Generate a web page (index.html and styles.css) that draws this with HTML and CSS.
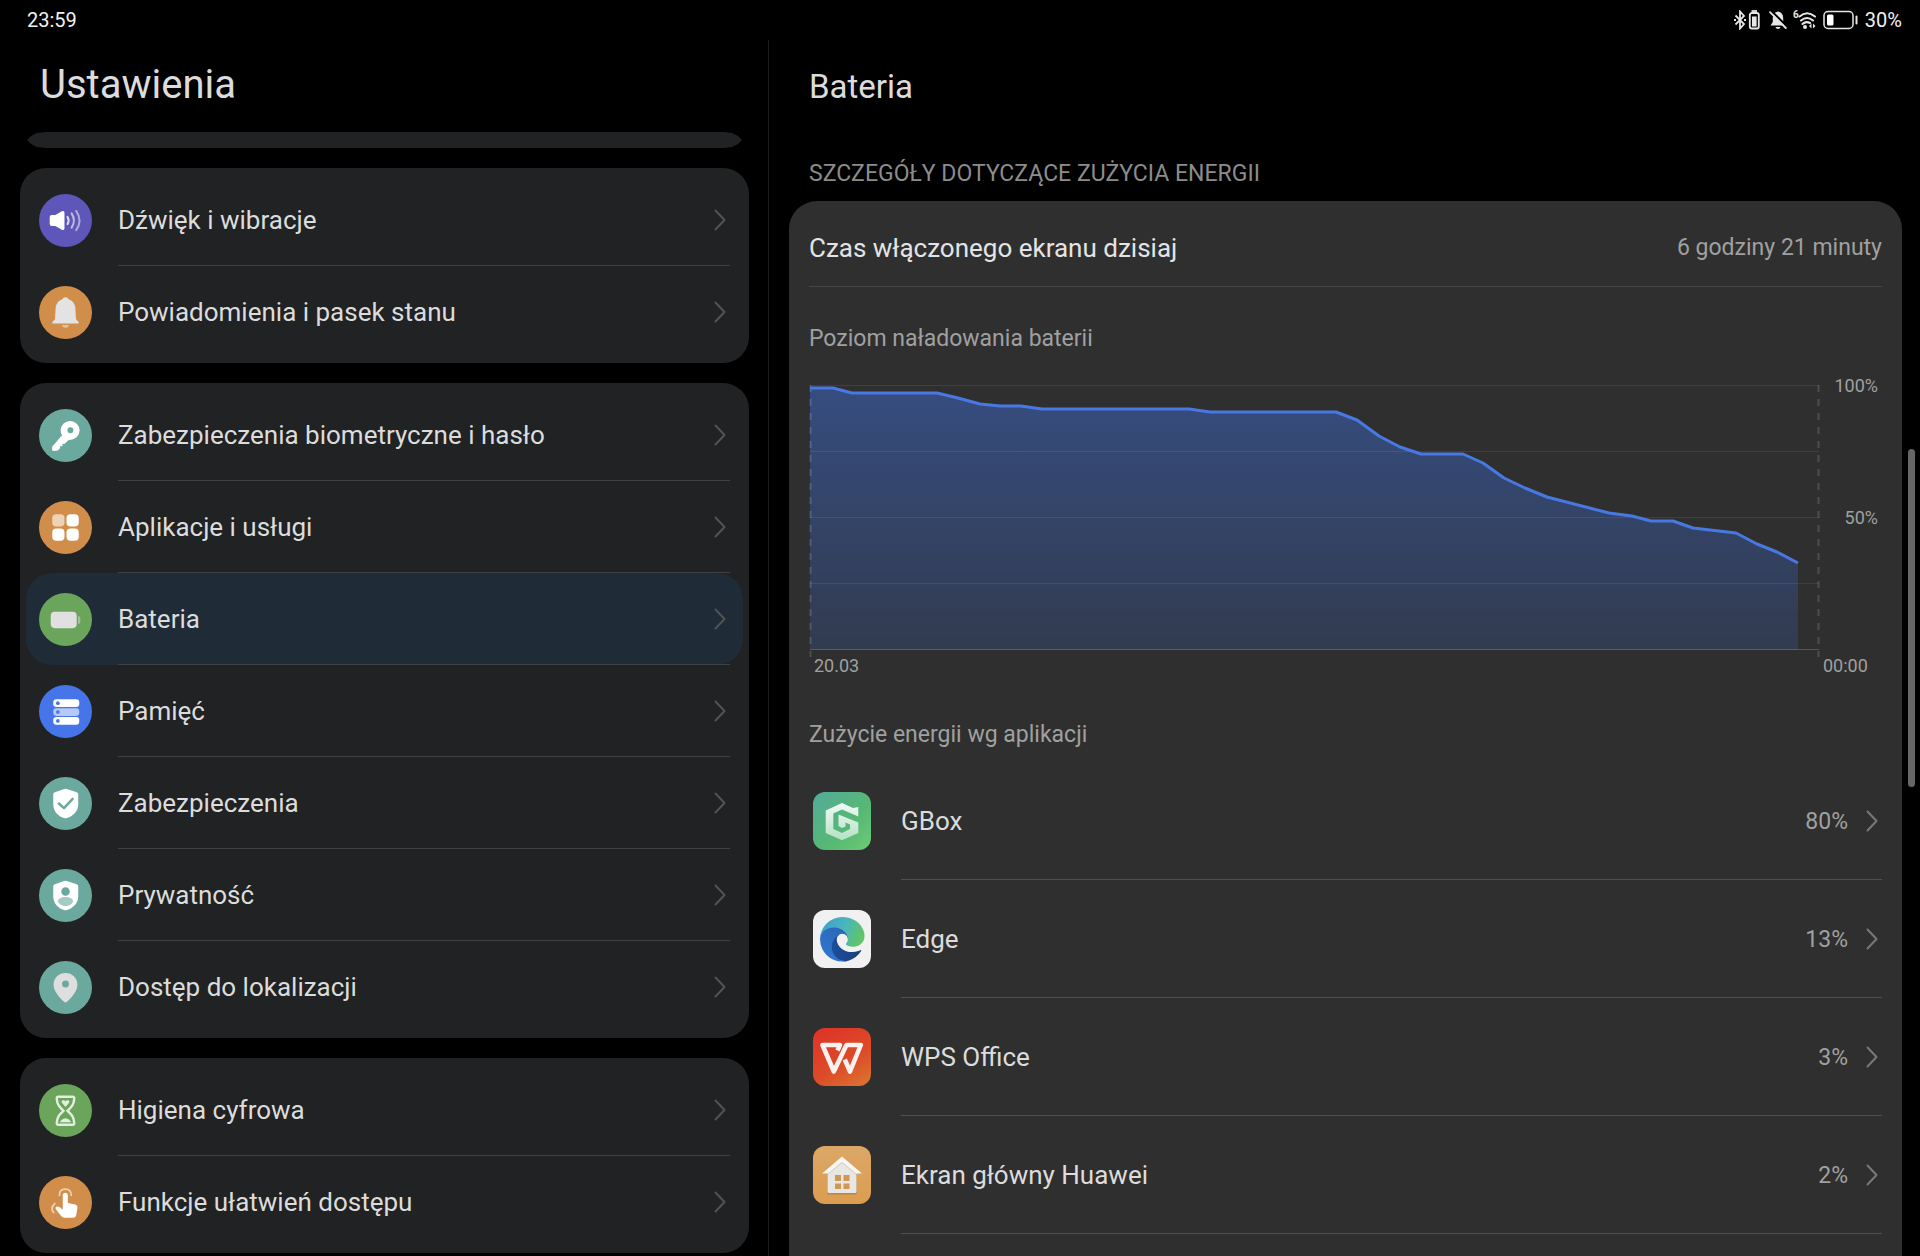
FILE: index.html
```html
<!DOCTYPE html>
<html lang="pl">
<head>
    <meta charset="UTF-8">
    <meta name="viewport" content="width=device-width, initial-scale=1.0">
    <title>Ustawienia - Bateria</title>
    <link rel="stylesheet" href="styles.css">
</head>
<body>

    <!-- shared icons -->
    <svg class="sprite" aria-hidden="true">
        <symbol id="chevron" viewBox="0 0 12 22">
            <path d="M1.5 1.5L10.5 11L1.5 20.5" fill="none" stroke="currentColor" stroke-width="2" stroke-linecap="round" stroke-linejoin="round"/>
        </symbol>
        <symbol id="shield" viewBox="0 0 52 52">
            <path d="M26 11.5Q27 11.5 28 12L37 15Q38.5 15.6 38.5 17V27C38.5 34 33 38.5 27.5 40.3Q26 40.8 24.5 40.3C19 38.5 14 34 14 27V17Q14 15.6 15.5 15L24 12Q25 11.5 26 11.5Z" fill="#fff"/>
        </symbol>
    </svg>

    <!-- status bar start -->
    <header class="status-bar">
        <span class="clock">23:59</span>
        <div class="status-icons">
            <svg class="icon-bt" viewBox="0 0 26 20" aria-hidden="true">
                <path d="M1.5 5.5L10 14L6 18.5V1.5L10 6L1.5 14.5" fill="none" stroke="#e6e6e6" stroke-width="1.8"/>
                <path d="M0 10H2M10 10H12" stroke="#e6e6e6" stroke-width="2"/>
                <rect x="15.8" y="3" width="9" height="15.5" rx="2" fill="none" stroke="#e6e6e6" stroke-width="1.8"/>
                <rect x="18" y="6.5" width="4.600" height="10" fill="#e6e6e6"/>
                <path d="M17.5 1H23" stroke="#e6e6e6" stroke-width="1.8"/>
            </svg>
            <svg class="icon-mute" viewBox="0 0 18 20" aria-hidden="true">
                <path d="M9 1.5C12.5 2 14.2 4.5 14.2 8V12L16.5 15.5H1.5L3.8 12V8C3.8 4.5 5.5 2 9 1.5Z" fill="#e6e6e6"/>
                <path d="M6.5 17H11.5Q11 19 9 19Q7 19 6.5 17Z" fill="#e6e6e6"/>
                <path d="M2 .5L18 16.5" stroke="#000" stroke-width="2"/>
                <path d="M1 2.2L16.8 18" stroke="#e6e6e6" stroke-width="1.8" stroke-linecap="round"/>
            </svg>
            <svg class="icon-wifi" viewBox="0 0 24 20" aria-hidden="true">
                <text x="0" y="8" class="wifi-gen">6</text>
                <path d="M6.5 6.5Q14 0 22 6.5M8 10.5Q14 5.5 20 10.5M9.5 14Q13 10.8 17 13" fill="none" stroke="#e6e6e6" stroke-width="2.1" stroke-linecap="round"/>
                <circle cx="12" cy="17" r="2" fill="#e6e6e6"/>
                <path d="M18.5 13.5V18.5L16 16ZM20 13.5V18.5L22.5 16Z" fill="#e6e6e6"/>
            </svg>
            <svg class="icon-battery" viewBox="0 0 36 20" aria-hidden="true">
                <rect x="1" y="1.5" width="29" height="17" rx="4" fill="none" stroke="#e6e6e6" stroke-width="1.5"/>
                <rect x="4" y="4.5" width="6.5" height="11" rx="1.5" fill="#fff"/>
                <path d="M33.5 6.5V13.5" stroke="#e6e6e6" stroke-width="2" stroke-linecap="round"/>
            </svg>
            <span>30%</span>
        </div>
    </header>
    <!-- status bar end -->

    <div class="container">

        <!-- settings list start -->
        <nav class="sidebar">
            <h1>Ustawienia</h1>
            <div class="card-cut"></div>

            <ul class="menu-card">
                <li><a href="#dzwiek">
                    <svg class="menu-icon" viewBox="0 0 52 52" aria-hidden="true">
                        <circle cx="26" cy="26" r="26" fill="#5e56b9"/>
                        <path d="M10.5 22.5Q10.5 20.5 12.5 20.5H16L22.5 17Q25 16 25 18.5V33.5Q25 36 22.5 35L16 31.5H12.5Q10.5 31.5 10.5 29.5Z" fill="#fff"/>
                        <g fill="none" stroke="#fff" stroke-width="2" stroke-linecap="round">
                            <path d="M28 22.5Q30 26 28 29.5" opacity=".8"/>
                            <path d="M32 19Q36.5 26 32 33" opacity=".6"/>
                            <path d="M36.5 16.5Q43 26 36.5 35.5" opacity=".5"/>
                        </g>
                    </svg>
                    <span class="menu-label">Dźwięk i wibracje <svg class="chevron" aria-hidden="true"><use href="#chevron"/></svg></span>
                </a></li>
                <li><a href="#powiadomienia">
                    <svg class="menu-icon" viewBox="0 0 52 52" aria-hidden="true">
                        <circle cx="26" cy="26" r="26" fill="#d18e4a"/>
                        <path d="M26 11Q28.5 11 29 13C33.5 14.5 35.5 18 35.7 22L36.3 32.5L39 35.5Q39.5 36.8 38 36.8H14Q12.5 36.8 13 35.5L15.7 32.5L16.3 22C16.5 18 18.5 14.5 23 13Q23.5 11 26 11Z" fill="#e3e3e3"/>
                        <path d="M22.5 38.3H29.5Q29 41 26 41Q23 41 22.5 38.3Z" fill="#e3e3e3" opacity=".6"/>
                    </svg>
                    <span class="menu-label">Powiadomienia i pasek stanu <svg class="chevron" aria-hidden="true"><use href="#chevron"/></svg></span>
                </a></li>
            </ul>

            <ul class="menu-card">
                <li><a href="#biometria">
                    <svg class="menu-icon" viewBox="0 0 52 52" aria-hidden="true">
                        <circle cx="26" cy="26" r="26" fill="#6ba89d"/>
                        <path d="M23 26L13.5 37V40.5H17.5L20 38.5V36H22.5V33.5H25L30 29" fill="#fff" stroke="#fff" stroke-width="1" stroke-linejoin="round"/>
                        <circle cx="30.5" cy="21" r="9.3" fill="#fff"/>
                        <circle cx="30.8" cy="20.8" r="2.9" fill="#6ba89d"/>
                    </svg>
                    <span class="menu-label">Zabezpieczenia biometryczne i hasło <svg class="chevron" aria-hidden="true"><use href="#chevron"/></svg></span>
                </a></li>
                <li><a href="#aplikacje">
                    <svg class="menu-icon" viewBox="0 0 52 52" aria-hidden="true">
                        <circle cx="26" cy="26" r="26" fill="#d18e4a"/>
                        <rect x="13" y="13" width="12" height="12" rx="4" fill="#fff" opacity=".6"/>
                        <rect x="27" y="13" width="12" height="12" rx="4" fill="#fff"/>
                        <rect x="13" y="27" width="12" height="12" rx="4" fill="#fff"/>
                        <rect x="27" y="27" width="12" height="12" rx="4" fill="#fff"/>
                    </svg>
                    <span class="menu-label">Aplikacje i usługi <svg class="chevron" aria-hidden="true"><use href="#chevron"/></svg></span>
                </a></li>
                <li class="active"><a href="#bateria" aria-current="page">
                    <svg class="menu-icon" viewBox="0 0 52 52" aria-hidden="true">
                        <circle cx="26" cy="26" r="26" fill="#6ba55c"/>
                        <rect x="11.5" y="18.5" width="25.5" height="16" rx="4" fill="#e0e0e0"/>
                        <path d="M38.3 22.5Q40.5 22.5 40.5 24.5V28.5Q40.5 30.5 38.3 30.5Z" fill="#e0e0e0" opacity=".5"/>
                    </svg>
                    <span class="menu-label">Bateria <svg class="chevron" aria-hidden="true"><use href="#chevron"/></svg></span>
                </a></li>
                <li><a href="#pamiec">
                    <svg class="menu-icon" viewBox="0 0 52 52" aria-hidden="true">
                        <circle cx="26" cy="26" r="26" fill="#4675ea"/>
                        <rect x="14" y="14" width="25.5" height="7.6" rx="3" fill="#fff"/>
                        <rect x="14" y="22.7" width="25.5" height="7.6" rx="3" fill="#fff" opacity=".6"/>
                        <rect x="14" y="31.4" width="25.5" height="7.6" rx="3" fill="#fff"/>
                        <g fill="#4675ea">
                            <circle cx="18.5" cy="17.8" r="1.8"/>
                            <circle cx="18.5" cy="26.5" r="1.8"/>
                            <circle cx="18.5" cy="35.2" r="1.8"/>
                        </g>
                    </svg>
                    <span class="menu-label">Pamięć <svg class="chevron" aria-hidden="true"><use href="#chevron"/></svg></span>
                </a></li>
                <li><a href="#zabezpieczenia">
                    <svg class="menu-icon" viewBox="0 0 52 52" aria-hidden="true">
                        <circle cx="26" cy="26" r="26" fill="#6ba89d"/>
                        <use href="#shield"/>
                        <path d="M19.5 26L24.5 30.5L33 21.5" fill="none" stroke="#6ba89d" stroke-width="2.4" stroke-linecap="round" stroke-linejoin="round"/>
                    </svg>
                    <span class="menu-label">Zabezpieczenia <svg class="chevron" aria-hidden="true"><use href="#chevron"/></svg></span>
                </a></li>
                <li><a href="#prywatnosc">
                    <svg class="menu-icon" viewBox="0 0 52 52" aria-hidden="true">
                        <circle cx="26" cy="26" r="26" fill="#6ba89d"/>
                        <use href="#shield"/>
                        <circle cx="26" cy="22" r="4.200" fill="#6ba89d"/>
                        <path d="M18.5 32C18.5 26 33.5 26 33.5 32C31 38 21 38 18.5 32Z" fill="#a6cac4"/>
                    </svg>
                    <span class="menu-label">Prywatność <svg class="chevron" aria-hidden="true"><use href="#chevron"/></svg></span>
                </a></li>
                <li><a href="#lokalizacja">
                    <svg class="menu-icon" viewBox="0 0 52 52" aria-hidden="true">
                        <circle cx="26" cy="26" r="26" fill="#6ba89d"/>
                        <path d="M26 11.7C32.5 11.7 37.7 16.5 37.7 23C37.7 30 31.5 36 27.5 40Q26 41.3 24.5 40C20.5 36 14.3 30 14.3 23C14.3 16.5 19.5 11.7 26 11.7Z" fill="#dedede"/>
                        <circle cx="26" cy="22.5" r="3.4" fill="#6ba89d"/>
                    </svg>
                    <span class="menu-label">Dostęp do lokalizacji <svg class="chevron" aria-hidden="true"><use href="#chevron"/></svg></span>
                </a></li>
            </ul>

            <ul class="menu-card">
                <li><a href="#higiena">
                    <svg class="menu-icon" viewBox="0 0 52 52" aria-hidden="true">
                        <circle cx="26" cy="26" r="26" fill="#6ba55c"/>
                        <path d="M19 12.5H33Q35 12.5 34.5 15C34 20.5 32 22.5 28 26.3C32 30 34 32 34.5 37.5Q35 40 33 40H19Q17 40 17.5 37.5C18 32 20 30 24 26.3C20 22.5 18 20.5 17.5 15Q17 12.5 19 12.5Z" fill="none" stroke="#e3eedf" stroke-width="2.4"/>
                        <path d="M26 22.5L22.5 18.5Q21.5 16.5 23.5 16Q25 15.7 26 17Q27 15.7 28.5 16Q30.5 16.5 29.5 18.5Z" fill="#e3eedf"/>
                        <path d="M20.5 37.5Q22 34 26 33.5Q30 34 31.5 37.5Z" fill="#e3eedf"/>
                    </svg>
                    <span class="menu-label">Higiena cyfrowa <svg class="chevron" aria-hidden="true"><use href="#chevron"/></svg></span>
                </a></li>
                <li><a href="#dostepnosc">
                    <svg class="menu-icon" viewBox="0 0 52 52" aria-hidden="true">
                        <circle cx="26" cy="26" r="26" fill="#d18e4a"/>
                        <path d="M23.3 19Q23.3 16.5 25.8 16.5Q28.3 16.5 28.3 19V26.5L35.5 28Q38 28.8 37.7 31.5L36.5 38.5Q36 41 33.5 41H25Q23 41 21.5 39L16.5 32.5Q15.5 30 18 30Q20.5 30.2 23.3 33Z" fill="#fff"/>
                        <g fill="none" stroke="#fff" stroke-width="1.7" stroke-linecap="round" opacity=".6">
                            <path d="M20 19Q20 12.8 25.8 12.8Q31.5 12.8 31.7 19"/>
                            <path d="M15.5 27Q10.5 31.5 14.5 36"/>
                        </g>
                    </svg>
                    <span class="menu-label">Funkcje ułatwień dostępu <svg class="chevron" aria-hidden="true"><use href="#chevron"/></svg></span>
                </a></li>
            </ul>
        </nav>
        <!-- settings list end -->

        <!-- battery details start -->
        <main class="content">
            <h2>Bateria</h2>
            <h3>SZCZEGÓŁY DOTYCZĄCE ZUŻYCIA ENERGII</h3>

            <section class="battery-card">
                <div class="screen-time">
                    <span>Czas włączonego ekranu dzisiaj</span>
                    <span class="value">6 godziny 21 minuty</span>
                </div>

                <p class="sub-title chart-title">Poziom naładowania baterii</p>
                <div class="chart">
                    <svg class="plot" viewBox="0 0 1009 265" preserveAspectRatio="none" role="img" aria-label="Poziom naładowania baterii">
                        <defs>
                            <linearGradient id="area" x1="0" y1="0" x2="0" y2="1">
                                <stop offset="0" stop-color="#3f74ea" stop-opacity=".43"/>
                                <stop offset="1" stop-color="#3f74ea" stop-opacity=".17"/>
                            </linearGradient>
                        </defs>
                        <path fill="url(#area)" d="M0 3H23L42 8H127L148 13L170 19L190 21H211L232 24H379L400 27H526L547 35L569 51L590 62L611 69H653L673 78L694 93L715 103L737 112L799 128L822 131L841 136H863L883 143L926 148L947 159L967 167L988 178V265H0Z"/>
                        <g class="grid-lines">
                            <path d="M0 .5H1009M0 66.5H1009M0 132.5H1009M0 198.5H1009"/>
                            <path class="base" d="M0 264.5H1009"/>
                            <path class="dashed" d="M.5 0V272M1008.5 0V272"/>
                        </g>
                        <path class="line" d="M0 3H23L42 8H127L148 13L170 19L190 21H211L232 24H379L400 27H526L547 35L569 51L590 62L611 69H653L673 78L694 93L715 103L737 112L799 128L822 131L841 136H863L883 143L926 148L947 159L967 167L988 178"/>
                    </svg>
                    <div class="y-axis">
                        <span>100%</span>
                        <span>50%</span>
                    </div>
                    <span class="x-start">20.03</span>
                    <span class="x-end">00:00</span>
                </div>

                <p class="sub-title apps-title">Zużycie energii wg aplikacji</p>
                <ul class="app-list">
                    <li><a href="#gbox">
                        <svg class="app-icon" viewBox="0 0 58 58" aria-hidden="true">
                            <defs>
                                <linearGradient id="gbox" x1="0" y1="0" x2="1" y2="1">
                                    <stop offset="0" stop-color="#53ab9a"/>
                                    <stop offset=".6" stop-color="#56b874"/>
                                    <stop offset="1" stop-color="#6dcc75"/>
                                </linearGradient>
                                <linearGradient id="gboxG" x1="0" y1="0" x2="0" y2="1">
                                    <stop offset="0" stop-color="#f1faf5"/>
                                    <stop offset="1" stop-color="#b4e2c4"/>
                                </linearGradient>
                            </defs>
                            <rect width="58" height="58" rx="12" fill="url(#gbox)"/>
                            <path d="M29 11L40 16L45.3 15V24.5L29 17.5L20.3 21.5V37L29 41L37 37V32.5L32.5 30.5V34.5L29 36L25.5 34V22.5L45.3 30.5V41L29 48.3L12.7 41V18.5Z" fill="url(#gboxG)"/>
                        </svg>
                        <span class="app-label">GBox <span class="percent">80% <svg class="chevron" aria-hidden="true"><use href="#chevron"/></svg></span></span>
                    </a></li>
                    <li><a href="#edge">
                        <svg class="app-icon" viewBox="0 0 58 58" aria-hidden="true">
                            <defs>
                                <linearGradient id="edgeDark" x1="0" y1="0" x2="1" y2="0">
                                    <stop offset="0" stop-color="#1b4f9e"/>
                                    <stop offset="1" stop-color="#1c3f7c"/>
                                </linearGradient>
                                <linearGradient id="edgeBlue" x1=".8" y1="0" x2=".3" y2="1">
                                    <stop offset="0" stop-color="#2c63b4"/>
                                    <stop offset="1" stop-color="#3179d0"/>
                                </linearGradient>
                                <linearGradient id="edgeTeal" x1="0" y1=".3" x2="1" y2=".6">
                                    <stop offset="0" stop-color="#3f9fd0"/>
                                    <stop offset=".5" stop-color="#49b5bd"/>
                                    <stop offset="1" stop-color="#62c660"/>
                                </linearGradient>
                            </defs>
                            <rect width="58" height="58" rx="12" fill="#f1f1f1"/>
                            <g transform="translate(7 7) scale(.174)">
                                <path fill="url(#edgeDark)" d="M231 190.5c-3.4 1.8-6.9 3.4-10.5 4.7a101.5 101.5 0 0 1-35.9 6.4c-47.3 0-88.5-32.5-88.5-74.3a31.5 31.5 0 0 1 16.4-27.3c-42.8 1.8-53.8 46.4-53.8 72.5 0 74 68.1 81.4 82.8 81.4 7.9 0 19.8-2.3 27-4.6l1.3-.4a128.3 128.3 0 0 0 66.6-52.8 4 4 0 0 0-5.4-5.6z"/>
                                <path fill="url(#edgeBlue)" d="M105.7 241.4a79.2 79.2 0 0 1-22.7-21.3 80.7 80.7 0 0 1 29.5-120c3.2-1.5 8.5-4.1 15.6-4a32.4 32.4 0 0 1 25.7 13 31.9 31.9 0 0 1 6.3 18.7c0-.2 24.5-79.6-80-79.6-43.9 0-80 41.6-80 78.2a130.2 130.2 0 0 0 12.1 56 128 128 0 0 0 156.4 67 75.5 75.5 0 0 1-62.8-8z"/>
                                <path fill="url(#edgeTeal)" d="M152.3 148.9c-.8 1-3.3 2.5-3.3 5.7 0 2.6 1.7 5.1 4.7 7.2 14.4 10 41.5 8.7 41.6 8.7 10.7 0 21.1-2.9 30.3-8.3A61.4 61.4 0 0 0 256 109.4c.3-22.4-8-37.3-11.3-43.9C223.5 23.9 177.7 0 128 0A128 128 0 0 0 0 126.2c.5-36.5 36.8-66 80-66 3.5 0 23.5.3 42 10 16.3 8.6 24.9 18.9 30.8 29.2 6.2 10.7 7.3 24.1 7.3 29.5 0 5.3-2.7 13.3-7.8 20z"/>
                            </g>
                        </svg>
                        <span class="app-label">Edge <span class="percent">13% <svg class="chevron" aria-hidden="true"><use href="#chevron"/></svg></span></span>
                    </a></li>
                    <li><a href="#wps">
                        <svg class="app-icon" viewBox="0 0 58 58" aria-hidden="true">
                            <defs>
                                <linearGradient id="wps" x1=".2" y1="0" x2=".8" y2="1">
                                    <stop offset="0" stop-color="#df3427"/>
                                    <stop offset=".6" stop-color="#dd4b28"/>
                                    <stop offset="1" stop-color="#db702f"/>
                                </linearGradient>
                            </defs>
                            <rect width="58" height="58" rx="12" fill="url(#wps)"/>
                            <path d="M24.5 22.5L27 17H9.5L20.8 43.5L33.5 17H47.8L37 43.5L31.8 31.5" fill="none" stroke="#fbf1ee" stroke-width="4.6" stroke-linejoin="round"/>
                        </svg>
                        <span class="app-label">WPS Office <span class="percent">3% <svg class="chevron" aria-hidden="true"><use href="#chevron"/></svg></span></span>
                    </a></li>
                    <li><a href="#huawei">
                        <svg class="app-icon" viewBox="0 0 58 58" aria-hidden="true">
                            <defs>
                                <linearGradient id="home" x1="0" y1="0" x2="0" y2="1">
                                    <stop offset="0" stop-color="#dca767"/>
                                    <stop offset="1" stop-color="#db9d50"/>
                                </linearGradient>
                            </defs>
                            <rect width="58" height="58" rx="12" fill="url(#home)"/>
                            <path d="M14 27.5H44V47Q44 48.5 42.5 48.5H15.5Q14 48.5 14 47Z" fill="#a8773a" opacity=".6"/>
                            <path d="M14.5 25L29 14L43.5 25V45.5Q43.5 47 42 47H16Q14.5 47 14.5 45.5Z" fill="#e9e7e3"/>
                            <path d="M29 10.5L49 27.5H43L29 16L15 27.5H9Z" fill="#f7f6f4"/>
                            <path d="M15 28L29 16.5L43 28" fill="none" stroke="#cfcac2" stroke-width="1"/>
                            <path d="M22 29H28V35H22ZM30.5 29H36.5V35H30.5ZM22 37.5H28V43H22ZM30.5 37.5H36.5V43H30.5Z" fill="#cf9853"/>
                        </svg>
                        <span class="app-label">Ekran główny Huawei <span class="percent">2% <svg class="chevron" aria-hidden="true"><use href="#chevron"/></svg></span></span>
                    </a></li>
                </ul>
            </section>
            <div class="scroll-thumb"></div>
        </main>
        <!-- battery details end -->

    </div>

</body>
</html>
```
FILE: styles.css
```css
* {
    box-sizing: border-box;
}

body {
    margin: 0;
    height: 100vh;
    display: flex;
    flex-direction: column;
    overflow: hidden;
    background-color: #000;
    color: #dcdcdc;
    font-family: Roboto, "Noto Sans", sans-serif;
    font-size: 26px;
}

h1, h2, h3, p, ul {
    margin: 0;
    padding: 0;
    font-weight: 400;
}

ul {
    list-style: none;
}

a {
    color: inherit;
    text-decoration: none;
}

.sprite {
    display: none;
}

/* status bar */

.status-bar {
    flex: none;
    height: 40px;
    padding: 0 18px 0 27px;
    display: flex;
    justify-content: space-between;
    align-items: center;
    font-size: 20px;
    color: #f0f0f0;
}

.status-icons {
    display: flex;
    align-items: center;
    gap: 6px;
}

.status-icons svg {
    height: 20px;
}

.icon-bt {
    width: 26px;
    margin-right: 3px;
}

.icon-mute {
    width: 18px;
}

.icon-wifi {
    width: 24px;
}

.icon-battery {
    width: 36px;
}

.wifi-gen {
    font-size: 10px;
    font-weight: 700;
    fill: #e6e6e6;
}

.container {
    flex: 1;
    min-height: 0;
    display: flex;
}

/* left side */

.sidebar {
    flex: 0 0 40%;
    padding: 0 19px 0 20px;
    overflow: hidden;
}

.sidebar h1 {
    height: 92px;
    padding: 0 20px;
    font-size: 40px;
    line-height: 90px;
}

/* card that has almost scrolled out of view */
.card-cut {
    height: 16px;
    margin: 0 7px 20px;
    background-color: #202223;
    clip-path: polygon(0 50%, 4px 25%, 10px 6%, 18px 0, calc(100% - 18px) 0, calc(100% - 10px) 6%, calc(100% - 4px) 25%, 100% 50%, calc(100% - 4px) 75%, calc(100% - 10px) 94%, calc(100% - 18px) 100%, 18px 100%, 10px 94%, 4px 75%);
}

.menu-card {
    margin-bottom: 20px;
    padding: 6px 6px 5px;
    border-radius: 26px;
    background-color: #202223;
}

.menu-card a {
    height: 92px;
    padding: 0 13px;
    display: flex;
    align-items: center;
    gap: 26px;
}

.menu-icon {
    flex: none;
    width: 53px;
    height: 53px;
}

.menu-label {
    flex: 1;
    height: 92px;
    padding-right: 4px;
    display: flex;
    justify-content: space-between;
    align-items: center;
    border-bottom: 1px solid #3e4042;
}

.menu-card li:last-child .menu-label {
    border-color: transparent;
}

.menu-card .active {
    border-radius: 26px;
    background-color: #202b38;
}

.chevron {
    flex: none;
    width: 12px;
    height: 22px;
    color: #515355;
}

/* right side */

.content {
    flex: 1;
    position: relative;
    display: flex;
    flex-direction: column;
    padding: 0 18px 0 20px;
    border-left: 1px solid #1c1c1c;
}

.content h2 {
    padding: 0 20px;
    font-size: 33px;
    line-height: 94px;
}

.content h3 {
    padding: 26px 20px 13px;
    font-size: 23px;
    line-height: 28px;
    color: #8c8c8c;
}

.battery-card {
    flex: 1;
    padding: 6px 20px 0;
    border-radius: 28px 28px 0 0;
    background-color: #2f2f2f;
}

.screen-time {
    height: 80px;
    padding-top: 2px;
    display: flex;
    justify-content: space-between;
    align-items: center;
    border-bottom: 1px solid #464646;
    color: #e4e4e4;
}

.value,
.percent,
.sub-title {
    font-size: 23px;
    color: #a0a0a0;
}

.sub-title {
    line-height: 28px;
}

.chart-title {
    padding: 38px 0 32px;
}

.apps-title {
    padding: 44px 0 13px;
}

/* battery chart */

.chart {
    display: grid;
    grid-template-columns: 1fr 63px;
    row-gap: 5px;
    padding-left: 1px;
    font-size: 18px;
    line-height: 22px;
    color: #a0a0a0;
}

.plot {
    display: block;
    width: 100%;
    height: 265px;
    overflow: visible;
}

.grid-lines path {
    stroke: #fff;
    stroke-opacity: .08;
}

.grid-lines .base {
    stroke-opacity: .18;
}

.grid-lines .dashed {
    stroke-opacity: .15;
    stroke-width: 2px;
    stroke-dasharray: 7 7;
}

.plot .line {
    fill: none;
    stroke: #4878e2;
    stroke-width: 3px;
    stroke-linejoin: round;
}

.y-axis {
    margin-top: -10px;
    padding-right: 4px;
    display: flex;
    flex-direction: column;
    align-items: flex-end;
    gap: 110px;
}

.x-start,
.x-end {
    padding-left: 4px;
}

/* app usage */

.app-list a {
    height: 118px;
    padding-left: 4px;
    display: flex;
    align-items: center;
    gap: 30px;
}

.app-icon {
    flex: none;
    width: 58px;
    height: 58px;
}

.app-label {
    flex: 1;
    height: 118px;
    padding: 1px 4px 0 0;
    display: flex;
    justify-content: space-between;
    align-items: center;
    border-bottom: 1px solid #505050;
}

.percent {
    display: flex;
    align-items: center;
    gap: 18px;
}

.percent .chevron {
    color: #787878;
}

.scroll-thumb {
    position: absolute;
    top: 409px;
    right: 5px;
    width: 7px;
    height: 338px;
    border-radius: 4px;
    background-color: #666;
}
```
